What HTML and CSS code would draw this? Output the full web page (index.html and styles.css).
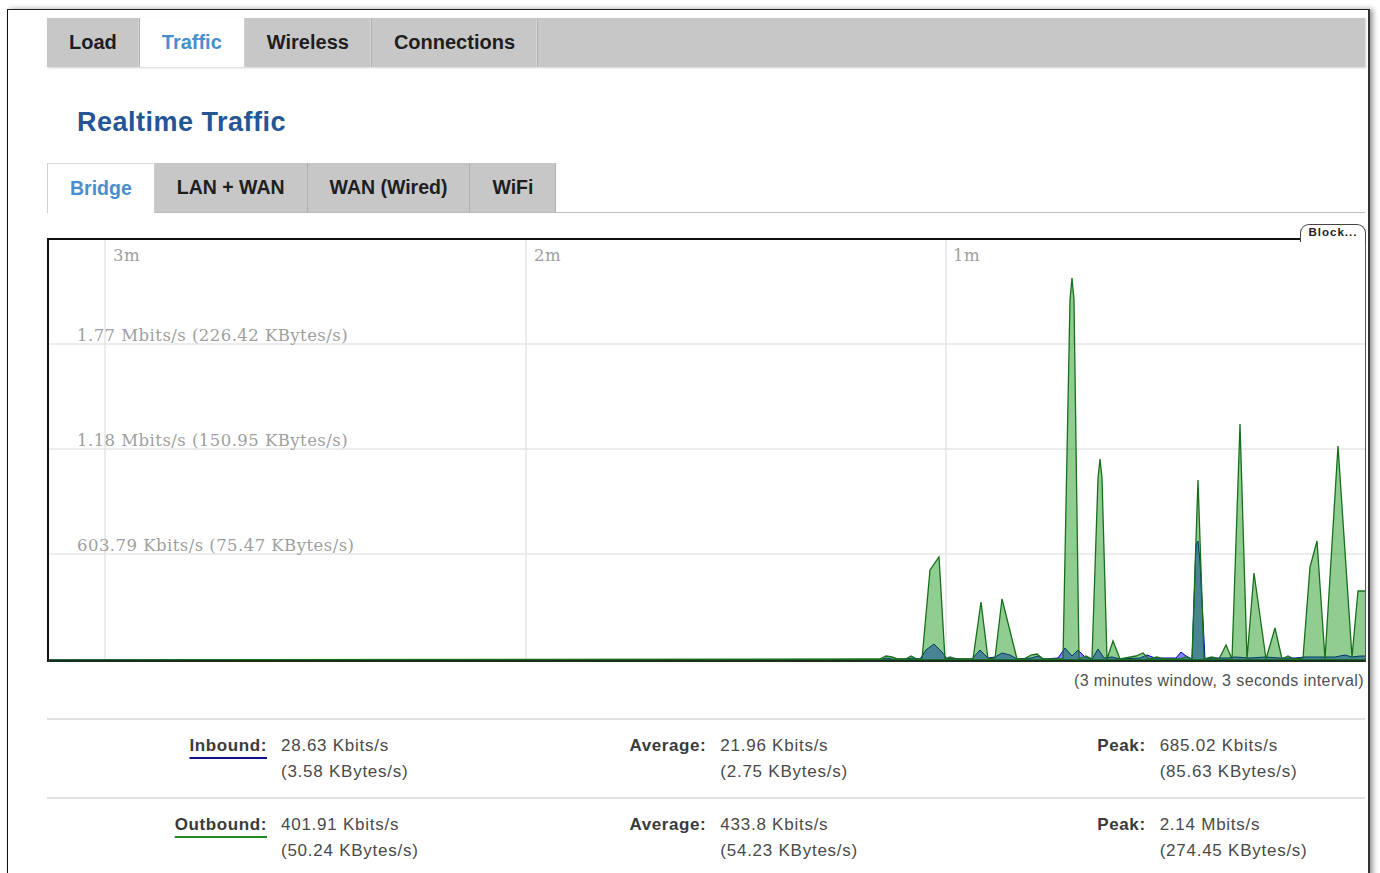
FILE: index.html
```html
<!DOCTYPE html>
<html>
<head>
<meta charset="utf-8">
<title>Realtime Traffic</title>
<link rel="stylesheet" href="styles.css">
</head>
<body>
<div class="window">
  <nav class="tabs">
    <a class="tab">Load</a><a class="tab active">Traffic</a><a class="tab">Wireless</a><a class="tab">Connections</a>
  </nav>

  <h2 class="title">Realtime Traffic</h2>

  <nav class="subtabs">
    <a class="subtab active">Bridge</a><a class="subtab">LAN + WAN</a><a class="subtab">WAN (Wired)</a><a class="subtab">WiFi</a>
  </nav>

  <div class="chart">
    <svg class="graph" width="1316" height="420" viewBox="49 240 1316 420" xmlns="http://www.w3.org/2000/svg">
      <g class="grid">
        <line x1="105" y1="240" x2="105" y2="660"/>
        <line x1="526" y1="240" x2="526" y2="660"/>
        <line x1="946" y1="240" x2="946" y2="660"/>
        <line x1="49" y1="344" x2="1365" y2="344"/>
        <line x1="49" y1="449" x2="1365" y2="449"/>
        <line x1="49" y1="554" x2="1365" y2="554"/>
      </g>
      <g class="axis">
        <text x="113" y="261">3m</text>
        <text x="534" y="261">2m</text>
        <text x="953" y="261">1m</text>
        <text x="77" y="341">1.77 Mbits/s (226.42 KBytes/s)</text>
        <text x="77" y="446">1.18 Mbits/s (150.95 KBytes/s)</text>
        <text x="77" y="551">603.79 Kbits/s (75.47 KBytes/s)</text>
      </g>
      <polygon class="rx" points="49,660 880,660 886,658 892,659 906,659 912,658 920,659 926,650 934,644 942,652 947,659 952,658 960,659 972,659 980,650 988,658 995,657 1002,653 1010,655 1017,659 1031,658 1038,656 1044,659 1058,658 1065,648 1072,656 1078,650 1085,657 1092,659 1098,649 1104,658 1112,657 1120,659 1140,658 1147,655 1155,658 1176,658 1181,652 1186,656 1192,659 1196,545 1198,541 1200,562 1205,659 1212,658 1228,658 1235,657 1250,658 1265,657 1280,658 1295,658 1305,657 1320,657 1335,657 1345,655 1352,657 1360,656 1366,656 1366,660"/>
      <polygon class="tx" points="49,660 880,659 886,656 892,657 898,659 906,659 911,656 917,659 922,659 930,570 939,557 945,659 950,657 956,659 973,659 981,602 988,659 995,658 1002,599 1017,659 1024,659 1031,655 1037,654 1043,659 1063,659 1070,300 1072,278 1074,300 1079,659 1086,656 1092,659 1098,478 1100,459 1102,478 1107,659 1113,641 1120,659 1136,656 1143,653 1149,659 1157,657 1163,659 1180,659 1186,657 1192,659 1198,480 1204,659 1212,657 1219,659 1226,645 1232,659 1240,424 1247,659 1254,573 1266,659 1275,628 1282,659 1288,656 1294,659 1303,658 1310,567 1317,541 1325,659 1338,446 1352,657 1358,591 1366,591 1366,660"/>
    </svg>
    <div class="block-tab">Block...</div>
  </div>

  <div class="caption">(3 minutes window, 3 seconds interval)</div>

  <div class="stats">
    <div class="row">
      <div class="cell"><div class="label"><span class="in">Inbound:</span></div><div class="value">28.63 Kbits/s<br>(3.58 KBytes/s)</div></div>
      <div class="cell"><div class="label">Average:</div><div class="value">21.96 Kbits/s<br>(2.75 KBytes/s)</div></div>
      <div class="cell"><div class="label">Peak:</div><div class="value">685.02 Kbits/s<br>(85.63 KBytes/s)</div></div>
    </div>
    <div class="row">
      <div class="cell"><div class="label"><span class="out">Outbound:</span></div><div class="value">401.91 Kbits/s<br>(50.24 KBytes/s)</div></div>
      <div class="cell"><div class="label">Average:</div><div class="value">433.8 Kbits/s<br>(54.23 KBytes/s)</div></div>
      <div class="cell"><div class="label">Peak:</div><div class="value">2.14 Mbits/s<br>(274.45 KBytes/s)</div></div>
    </div>
  </div>
</div>
</body>
</html>
```

FILE: styles.css
```css
html, body {
  margin: 0;
  padding: 0;
  background: #ffffff;
  overflow: hidden;
}

body {
  font-family: "Liberation Sans", Arial, sans-serif;
  color: #333;
}

.window {
  margin: 9px 0 0 7px;
  width: 1363px;
  box-sizing: border-box;
  min-height: 900px;
  padding: 8px 3px 0 39px;
  border-left: 1px solid #111;
  border-top: 1px solid #222;
  border-right: 2px solid #333;
  box-shadow: 3px 0 5px rgba(0, 0, 0, 0.4);
  background: #fff;
}

/* top tabs */
.tabs {
  display: flex;
  height: 49px;
  width: 1318px;
  background: #c7c7c7;
  box-shadow: 1px 1px 2px rgba(0, 0, 0, 0.18);
}

.tab {
  display: flex;
  align-items: center;
  padding: 0 22px;
  font-size: 20px;
  font-weight: bold;
  color: #1e1e1e;
  border-right: 1px solid #b0b0b0;
  box-shadow: inset -1px 0 0 #d6d6d6;
}

.tab.active {
  background: #fff;
  color: #4a8fcc;
  box-shadow: none;
  border-right-color: #d0d0d0;
}

/* title */
.title {
  margin: 39px 0 0 0;
  padding-left: 30px;
  font-size: 27px;
  line-height: 32px;
  font-weight: bold;
  letter-spacing: 0.5px;
  color: #255596;
}

/* sub tabs */
.subtabs {
  display: flex;
  margin-top: 25px;
  width: 1318px;
  height: 49px;
  border-bottom: 1px solid #bdbdbd;
}

.subtab {
  display: flex;
  align-items: center;
  padding: 0 22px;
  font-size: 19.5px;
  font-weight: bold;
  color: #1e1e1e;
  background: #c7c7c7;
  border-right: 1px solid #b0b0b0;
}

.subtab.active {
  background: #fff;
  color: #4a8fcc;
  border-left: 1px solid #cfcfcf;
  border-top: 1px solid #dcdcdc;
  border-right: 1px solid #cfcfcf;
  margin-bottom: -1px;
}

/* chart */
.chart {
  position: relative;
  margin-top: 25px;
  width: 1319px;
  box-sizing: border-box;
  border-top: 2px solid #111;
  border-left: 2px solid #111;
  border-right: 1px solid #555;
  border-bottom: 2px solid #1d2d1d;
}

.graph {
  display: block;
}

.grid line {
  stroke: #e6e6e6;
  stroke-width: 1.5;
}

.axis text {
  font-family: "DejaVu Serif", serif;
  font-size: 16.5px;
  fill: #a0a0a0;
  letter-spacing: 0.45px;
}

.rx {
  fill: rgba(0, 0, 255, 0.5);
  stroke: #0000b0;
  stroke-width: 1;
}

.tx {
  fill: rgba(0, 140, 0, 0.43);
  stroke: #16701a;
  stroke-width: 1.3;
}

.block-tab {
  position: absolute;
  top: -16px;
  right: -1px;
  width: 66px;
  height: 18px;
  box-sizing: border-box;
  border: 1.5px solid #444;
  border-bottom: none;
  border-radius: 9px 9px 0 0;
  background: #fff;
  font-size: 11.5px;
  font-weight: bold;
  letter-spacing: 1px;
  line-height: 15px;
  text-align: center;
  color: #222;
}

/* caption */
.caption {
  margin-top: 9px;
  width: 1317px;
  text-align: right;
  font-size: 16px;
  line-height: 20px;
  letter-spacing: 0.4px;
  color: #505050;
}

/* stats */
.stats {
  margin-top: 27px;
  width: 1318px;
}

.row {
  display: grid;
  grid-template-columns: 1fr 1fr 1fr;
  border-top: 2px solid #e2e2e2;
  padding: 13px 0 12px 0;
}

.cell {
  display: flex;
  font-size: 17px;
  line-height: 26px;
  letter-spacing: 0.75px;
}

.label {
  width: 220px;
  text-align: right;
  font-weight: bold;
  color: #3a3a3a;
  letter-spacing: 0.6px;
}

.value {
  padding-left: 14px;
  color: #4a4a4a;
}

.in {
  text-decoration: underline;
  text-decoration-color: #101090;
  text-decoration-thickness: 2px;
  text-underline-offset: 6px;
}

.out {
  text-decoration: underline;
  text-decoration-color: #238a23;
  text-decoration-thickness: 2px;
  text-underline-offset: 6px;
}
```
